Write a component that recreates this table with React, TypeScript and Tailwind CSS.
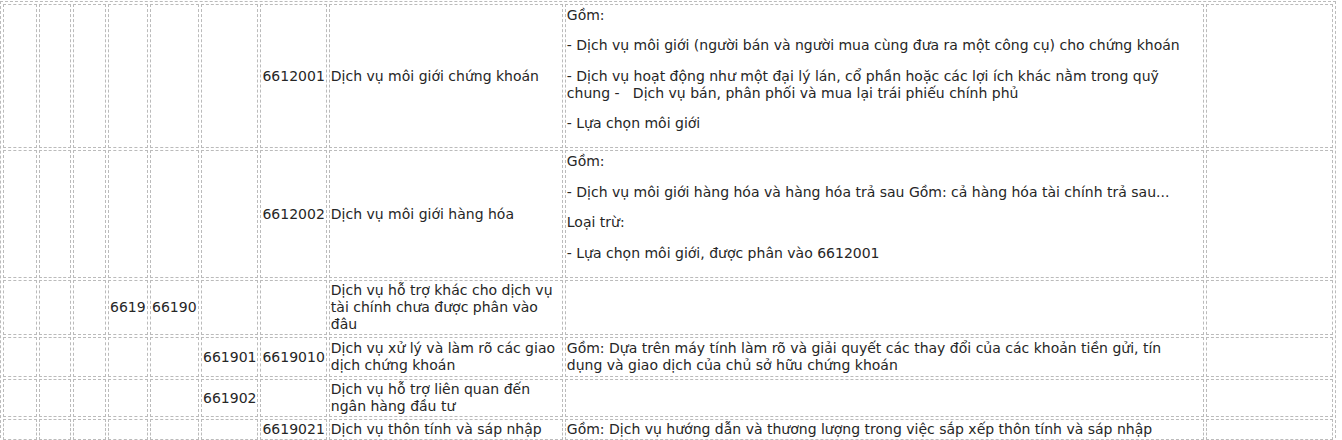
import React from "react";

type Row = {
  h: string;
  cells: Record<number, React.ReactNode>;
};

const widths = [
  "w-[34px]",
  "w-[32px]",
  "w-[33px]",
  "w-[40px]",
  "w-[49px]",
  "w-[57px]",
  "w-[66px]",
  "w-[234px]",
  "w-[639px]",
  "w-[127px]",
];

const rows: Row[] = [
  {
    h: "h-[144px]",
    cells: {
      6: "6612001",
      7: "Dịch vụ môi giới chứng khoán",
      8: (
        <>
          <p className="mb-[13.5px]">Gồm:</p>
          <p className="mb-[13.5px]">
            - Dịch vụ môi giới (người bán và người mua cùng đưa ra một công cụ) cho chứng khoán
          </p>
          <p className="mb-[13.5px]">
            - Dịch vụ hoạt động như một đại lý lán, cổ phần hoặc các lợi ích khác nằm trong quỹ
            <br />
            chung -&nbsp;&nbsp; Dịch vụ bán, phân phối và mua lại trái phiếu chính phủ
          </p>
          <p className="mb-[13.5px]">- Lựa chọn môi giới</p>
        </>
      ),
    },
  },
  {
    h: "h-[128px]",
    cells: {
      6: "6612002",
      7: "Dịch vụ môi giới hàng hóa",
      8: (
        <>
          <p className="mb-[13.5px]">Gồm:</p>
          <p className="mb-[13.5px]">
            - Dịch vụ môi giới hàng hóa và hàng hóa trả sau Gồm: cả hàng hóa tài chính trả sau...
          </p>
          <p className="mb-[13.5px]">Loại trừ:</p>
          <p className="mb-[13.5px]">- Lựa chọn môi giới, được phân vào 6612001</p>
        </>
      ),
    },
  },
  {
    h: "h-[55px]",
    cells: {
      3: "6619",
      4: "66190",
      7: (
        <>
          Dịch vụ hỗ trợ khác cho dịch vụ
          <br />
          tài chính chưa được phân vào
          <br />
          đâu
        </>
      ),
    },
  },
  {
    h: "h-[40px]",
    cells: {
      5: "661901",
      6: "6619010",
      7: (
        <>
          Dịch vụ xử lý và làm rõ các giao
          <br />
          dịch chứng khoán
        </>
      ),
      8: (
        <>
          Gồm: Dựa trên máy tính làm rõ và giải quyết các thay đổi của các khoản tiền gửi, tín
          <br />
          dụng và giao dịch của chủ sở hữu chứng khoán
        </>
      ),
    },
  },
  {
    h: "h-[36px]",
    cells: {
      5: "661902",
      7: (
        <>
          Dịch vụ hỗ trợ liên quan đến
          <br />
          ngân hàng đầu tư
        </>
      ),
    },
  },
  {
    h: "h-[20px]",
    cells: {
      6: "6619021",
      7: "Dịch vụ thôn tính và sáp nhập",
      8: "Gồm: Dịch vụ hướng dẫn và thương lượng trong việc sắp xếp thôn tính và sáp nhập",
    },
  },
];

export default function App() {
  return (
    <div className="bg-white w-[1342px] h-[440px] overflow-hidden">
      <table
        className="mt-px table-fixed border-separate border-spacing-[2px] border border-dashed border-[#bbb] text-[#262626] text-[14px] leading-[17px]"
        style={{ fontFamily: '"DejaVu Sans", Verdana, sans-serif' }}
      >
        <colgroup>
          {widths.map((w, i) => (
            <col key={i} className={w} />
          ))}
        </colgroup>
        <tbody>
          {rows.map((row, r) => (
            <tr key={r} className={row.h}>
              {widths.map((_, c) => (
                <td
                  key={c}
                  className="p-px align-middle border border-dashed border-[#bbb] whitespace-nowrap overflow-hidden"
                >
                  {row.cells[c] ?? null}
                </td>
              ))}
            </tr>
          ))}
        </tbody>
      </table>
    </div>
  );
}
